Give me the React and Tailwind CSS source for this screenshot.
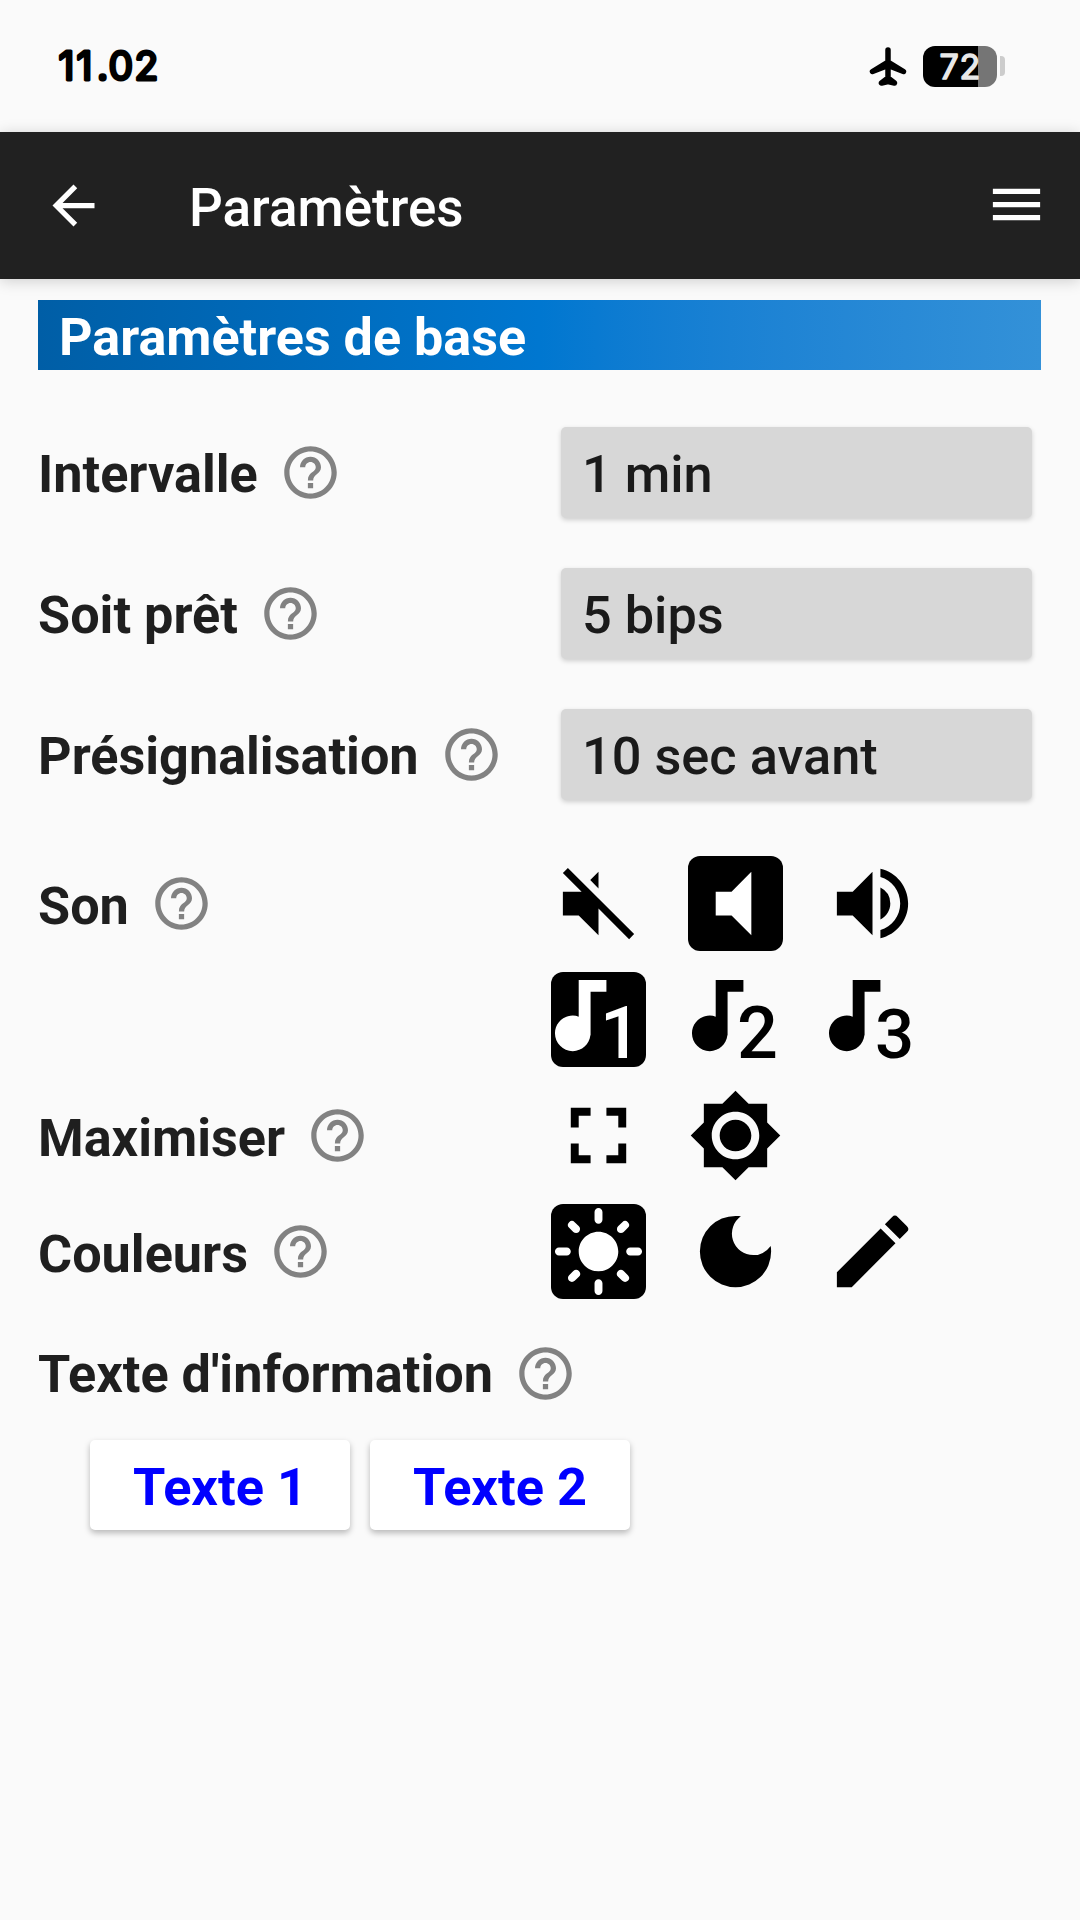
import {
  MdArrowBack, MdMenu, MdHelpOutline, MdVolumeMute, MdVolumeUp, MdFullscreen,
  MdBrightness7, MdLightMode, MdDarkMode, MdEdit,
} from "react-icons/md";

function StatusBar() {
  return (
    <div className="flex h-[132px] items-center justify-between pl-[57px] pr-[75px]">
      <svg className="h-[80px] w-[120px] overflow-visible" viewBox="0 0 120 80" aria-label="11.02">
        <g className="fill-black stroke-black" strokeWidth="3" strokeLinejoin="round" fontFamily="Inter, sans-serif" fontWeight="400" fontSize="39">
          <text x="1.500 19.500 40 51.500 77.500" y="53.500">11.02</text>
        </g>
      </svg>
      <div className="flex items-center">
        <svg className="mr-[16px] h-[40px] w-[38px]" viewBox="0 0 38 40">
          <path
            d="M19 4v13M19 16L3.500 25.500 19 19.500 34.500 25.500zM19 16v18M19 32L12.500 37 19 35.500 25.500 37z"
            className="fill-black stroke-black" strokeWidth="5.500" strokeLinejoin="round" strokeLinecap="round"
          />
        </svg>
        <div className="flex h-[41px] w-[74px] items-center justify-center rounded-[12px] bg-[linear-gradient(90deg,#000_0_55px,#757575_55px)]">
          <svg className="h-[60px] w-[74px] shrink-0 overflow-visible" viewBox="0 0 74 60">
            <text x="16.500 36.500" y="42.500" fontFamily="Inter, sans-serif" fontWeight="400" fontSize="34" className="fill-[#e8e8e8] stroke-[#e8e8e8]" strokeWidth="1.500" strokeLinejoin="round">72</text>
          </svg>
        </div>
        <div className="ml-[3px] h-[20px] w-[5px] rounded-r-[4px] bg-[#ccc]" />
      </div>
    </div>
  );
}

function Label({ low, children }) {
  return (
    <div className="flex items-center">
      <span className={`whitespace-nowrap text-[52.2px] leading-[60px] font-bold text-[#1f1f1f] ${low ? "pt-[8px]" : "pt-[4px]"}`}>{children}</span>
      <MdHelpOutline className="ml-[21px] size-[63px] shrink-0 text-[#828282]" />
    </div>
  );
}

function SelectRow({ label, value }) {
  return (
    <div className="flex h-[141px] items-center justify-between pr-[9px]">
      <Label>{label}</Label>
      <button className="h-[91px] w-[471px] rounded-[5px] bg-[#d7d7d7] pl-[21px] text-left text-[52.3px] leading-[95px] font-medium text-[#1a1a1a] shadow-[0_2px_5px_rgba(0,0,0,0.18)]">
        {value}
      </button>
    </div>
  );
}

function Tile({ active, children }) {
  return (
    <div className={active ? "size-[95px] rounded-[12px] bg-black text-white" : "size-[95px] text-black"}>
      {children}
    </div>
  );
}

function Note({ digit, x, size }) {
  return (
    <svg className="size-full overflow-visible" viewBox="0 0 95 95" fill="currentColor">
      <path transform="scale(3.958) translate(-5 -1)" d="M12 3v9.280c-.47-.17-.97-.28-1.500-.28C8.010 12 6 14.010 6 16.500S8.010 21 10.500 21c2.310 0 4.200-1.750 4.450-4H15V6h4V3h-7z" />
      <text x={x} y="86" fontFamily="Roboto, sans-serif" fontWeight="500" fontSize={size}>{digit}</text>
    </svg>
  );
}

function VolumeOff() {
  return (
    <svg className="size-full" viewBox="0 0 24 24" fill="currentColor">
      <path d="M4.270 3L3 4.270 7.730 9H3v6h4l5 5v-6.730L19.730 21 21 19.730 4.270 3zM12 4L9.910 6.090 12 8.180V4z" />
    </svg>
  );
}

function IconRow({ label, children }) {
  return (
    <div className="grid h-[116px] grid-cols-[513px_1fr] items-center">
      {label ? <Label low>{label}</Label> : <span />}
      <div className="flex gap-[42px]">{children}</div>
    </div>
  );
}

function TextButton({ children }) {
  return (
    <button className="h-[90px] w-[260px] rounded-[5px] bg-white text-[52.3px] leading-[94px] font-bold text-[#0000ff] shadow-[0_3px_6px_rgba(0,0,0,0.27)]">
      {children}
    </button>
  );
}

export default function App() {
  return (
    <div className="flex h-[1920px] w-[1080px] flex-col overflow-hidden bg-[#fafafa] font-['Roboto',sans-serif]">
      <StatusBar />
      <header className="flex h-[147px] shrink-0 items-center bg-[#212121] pl-[42px] pr-[32px] text-white shadow-[0_2px_14px_rgba(0,0,0,0.18)]">
        <MdArrowBack className="size-[63px]" />
        <h1 className="ml-[84px] flex-1 pt-[4px] text-[53px] leading-[60px] font-medium">Paramètres</h1>
        <MdMenu className="size-[63px] -translate-y-[1px]" />
      </header>
      <main className="flex flex-col pt-[21px] pr-[39px] pl-[38px]">
        <h2 className="h-[70px] bg-linear-to-r from-[#005ea6] via-[#0077d0] to-[#3391d8] pl-[21px] text-[52.1px] leading-[75px] font-bold text-white">
          Paramètres de base
        </h2>
        <div className="mt-[32px]">
          <SelectRow label="Intervalle" value="1 min" />
          <SelectRow label="Soit prêt" value="5 bips" />
          <SelectRow label="Présignalisation" value="10 sec avant" />
        </div>
        <div className="mt-[20px]">
          <IconRow label="Son">
            <Tile><VolumeOff /></Tile>
            <Tile active><MdVolumeMute className="size-full" /></Tile>
            <Tile><MdVolumeUp className="size-full" /></Tile>
          </IconRow>
          <IconRow>
            <Tile active><Note digit="1" x="49" size="72" /></Tile>
            <Tile><Note digit="2" x="49" size="72" /></Tile>
            <Tile><Note digit="3" x="50" size="69" /></Tile>
          </IconRow>
          <IconRow label="Maximiser">
            <Tile><MdFullscreen className="size-full" /></Tile>
            <Tile><MdBrightness7 className="size-full" /></Tile>
          </IconRow>
          <IconRow label="Couleurs">
            <Tile active><MdLightMode className="size-full" /></Tile>
            <Tile><MdDarkMode className="size-full" /></Tile>
            <Tile><MdEdit className="size-full" /></Tile>
          </IconRow>
        </div>
        <div className="mt-[32px]">
          <Label>Texte d'information</Label>
        </div>
        <div className="mt-[35px] ml-[52px] flex gap-[20px]">
          <TextButton>Texte 1</TextButton>
          <TextButton>Texte 2</TextButton>
        </div>
      </main>
    </div>
  );
}
